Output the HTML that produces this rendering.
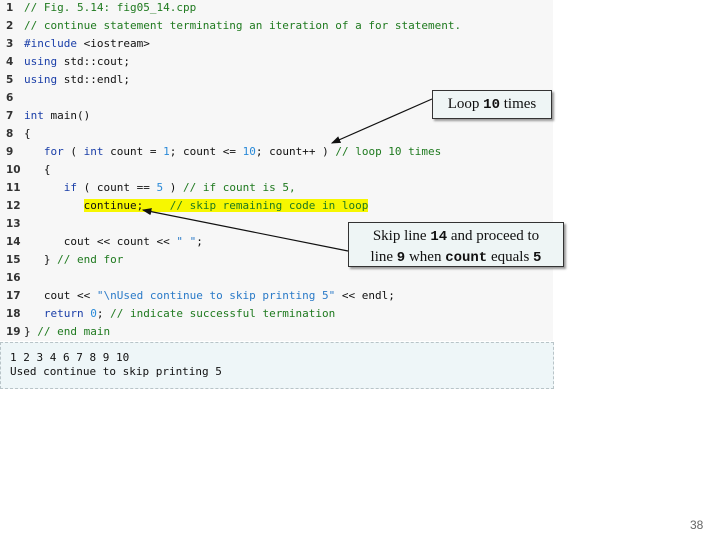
<!DOCTYPE html>
<html><head><meta charset="utf-8"><style>
body{margin:0;width:720px;height:540px;background:#fff;position:relative;overflow:hidden;font-family:"DejaVu Sans Mono",monospace}
.code{position:absolute;left:0;top:0;width:553px;height:341px;background:#f7f7f7}
.l{position:absolute;left:0;height:18px;line-height:18px;font-size:11px;color:#111;white-space:pre}
.n{position:absolute;left:6px;font-family:"DejaVu Sans",sans-serif;font-weight:bold;color:#333;font-size:10.5px}
.c{position:absolute;left:24px}
.k{color:#1a3ea8}.g{color:#1f7a1f}.b{color:#2a8ad8}.s{color:#2a7ac8}
.hl{background:#f7f700}
.out{position:absolute;left:0;top:342px;width:554px;height:47px;background:#eef6f8;border:1px dashed #b8c4c8;font-size:11px;line-height:14px;padding:8px 0 0 9px;box-sizing:border-box;white-space:pre;color:#111}
.box{position:absolute;background:#eef5f5;border:1px solid #333;box-shadow:2px 2px 2px #999;font-family:"Liberation Serif",serif;font-size:15px;color:#111;text-align:center}
.box b{font-family:"Liberation Mono",monospace;font-size:14px}
.pg{position:absolute;left:690px;top:518px;font-family:"Liberation Sans",sans-serif;font-size:12px;color:#666}
</style></head><body>
<div class="code">
<div class="l" style="top:-1px"><span class="n">1</span><span class="c g">// Fig. 5.14: fig05_14.cpp</span></div>
<div class="l" style="top:17px"><span class="n">2</span><span class="c g">// continue statement terminating an iteration of a for statement.</span></div>
<div class="l" style="top:35px"><span class="n">3</span><span class="c"><span class="k">#include</span> &lt;iostream&gt;</span></div>
<div class="l" style="top:53px"><span class="n">4</span><span class="c"><span class="k">using</span> std::cout;</span></div>
<div class="l" style="top:71px"><span class="n">5</span><span class="c"><span class="k">using</span> std::endl;</span></div>
<div class="l" style="top:89px"><span class="n">6</span></div>
<div class="l" style="top:107px"><span class="n">7</span><span class="c"><span class="k">int</span> main()</span></div>
<div class="l" style="top:125px"><span class="n">8</span><span class="c">{</span></div>
<div class="l" style="top:143px"><span class="n">9</span><span class="c">   <span class="k">for</span> ( <span class="k">int</span> count = <span class="b">1</span>; count &lt;= <span class="b">10</span>; count++ ) <span class="g">// loop 10 times</span></span></div>
<div class="l" style="top:161px"><span class="n">10</span><span class="c">   {</span></div>
<div class="l" style="top:179px"><span class="n">11</span><span class="c">      <span class="k">if</span> ( count == <span class="b">5</span> ) <span class="g">// if count is 5,</span></span></div>
<div class="l" style="top:197px"><span class="n">12</span><span class="c">         <span class="hl">continue;    <span class="g">// skip remaining code in loop</span></span></span></div>
<div class="l" style="top:215px"><span class="n">13</span></div>
<div class="l" style="top:233px"><span class="n">14</span><span class="c">      cout &lt;&lt; count &lt;&lt; <span class="s">" "</span>;</span></div>
<div class="l" style="top:251px"><span class="n">15</span><span class="c">   } <span class="g">// end for</span></span></div>
<div class="l" style="top:269px"><span class="n">16</span></div>
<div class="l" style="top:287px"><span class="n">17</span><span class="c">   cout &lt;&lt; <span class="s">"\nUsed continue to skip printing 5"</span> &lt;&lt; endl;</span></div>
<div class="l" style="top:305px"><span class="n">18</span><span class="c">   <span class="k">return</span> <span class="b">0</span>; <span class="g">// indicate successful termination</span></span></div>
<div class="l" style="top:323px"><span class="n">19</span><span class="c">} <span class="g">// end main</span></span></div>
</div>
<div class="out">1 2 3 4 6 7 8 9 10
Used continue to skip printing 5</div>
<svg style="position:absolute;left:0;top:0" width="720" height="540">
<defs><marker id="a" markerWidth="8" markerHeight="6" refX="7" refY="3" orient="auto"><path d="M0,0 L8,3 L0,6 z" fill="#111"/></marker></defs>
<line x1="432" y1="99" x2="332" y2="143" stroke="#111" stroke-width="1.2" marker-end="url(#a)"/>
<line x1="348" y1="251" x2="143" y2="210" stroke="#111" stroke-width="1.2" marker-end="url(#a)"/>
</svg>
<div class="box" style="left:432px;top:90px;width:118px;height:27px;line-height:27px">Loop <b>10</b> times</div>
<div class="box" style="left:348px;top:222px;width:216px;height:45px;line-height:20px;padding-top:3px;box-sizing:border-box">Skip line <b>14</b> and proceed to<br>line <b>9</b> when <b>count</b> equals <b>5</b></div>
<div class="pg">38</div>
</body></html>
